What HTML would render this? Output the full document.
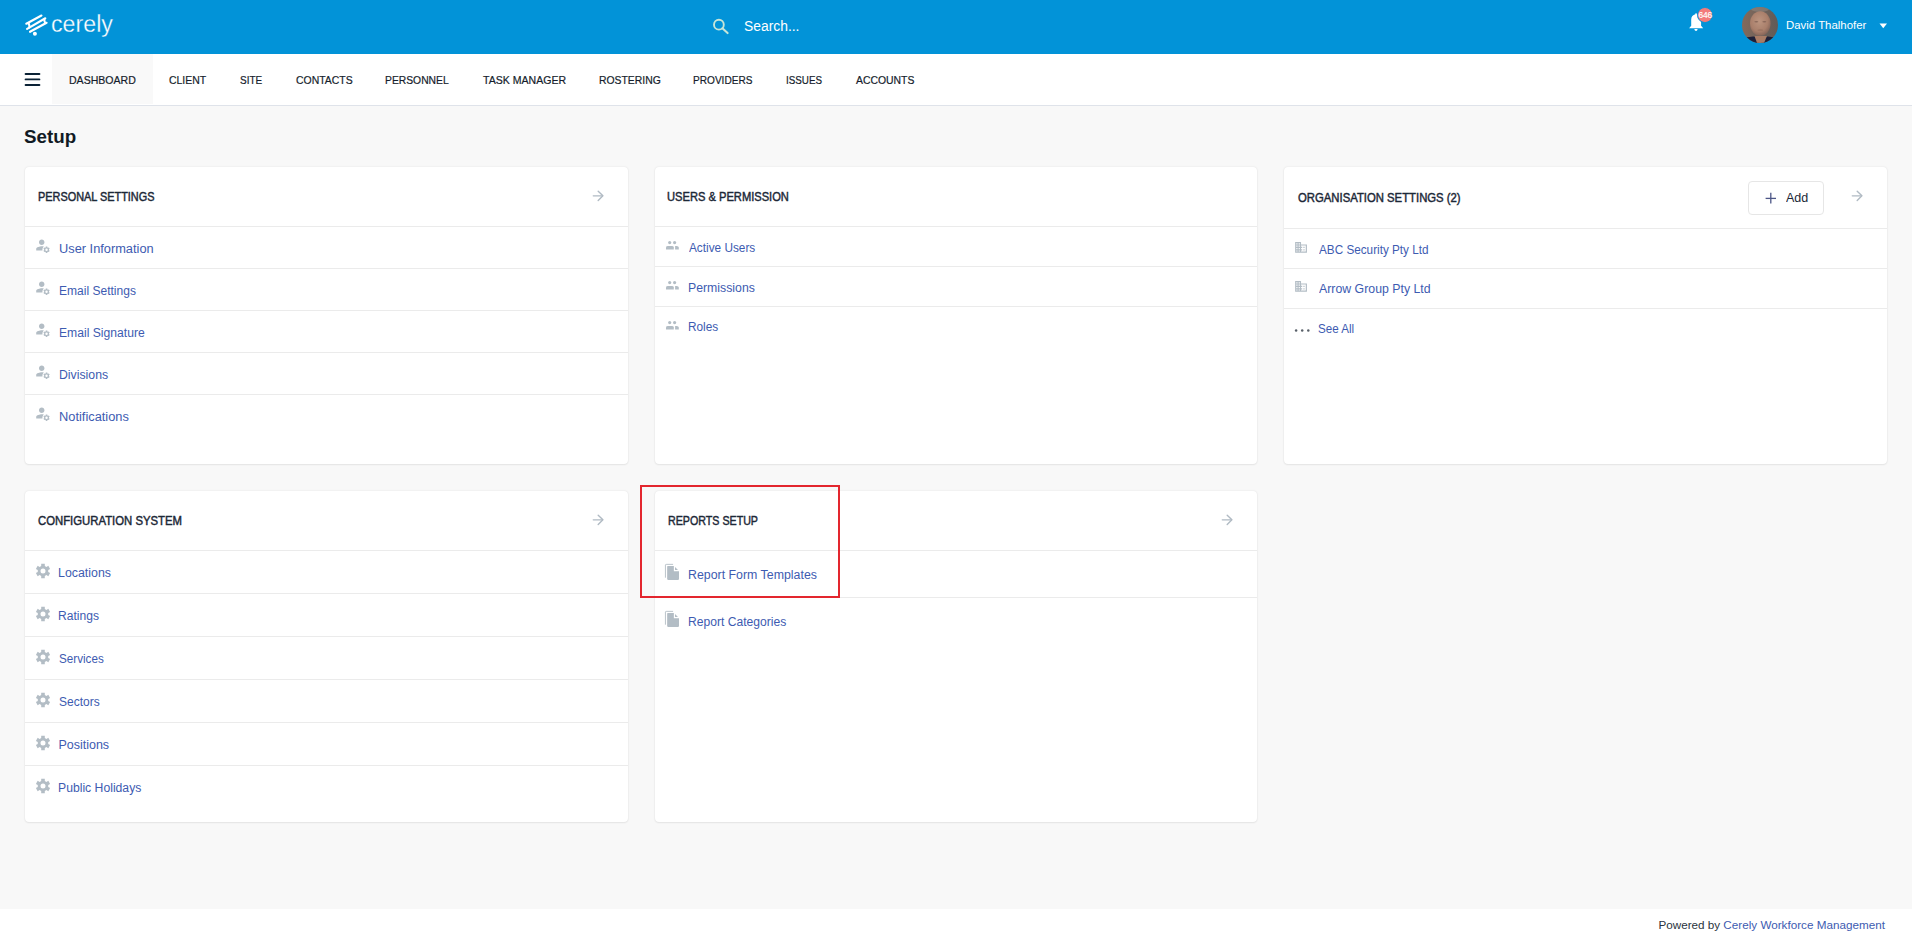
<!DOCTYPE html>
<html><head><meta charset="utf-8"><title>Setup - Cerely</title>
<style>
html,body{margin:0;padding:0}
body{width:1912px;height:934px;position:relative;overflow:hidden;background:#f8f8f8;font-family:"Liberation Sans",sans-serif}
.a{position:absolute}
.t{position:absolute;line-height:1;white-space:nowrap}
.card{background:#fff;border-radius:4px;box-shadow:0 0 2px rgba(0,0,0,0.10),0 1px 2px rgba(0,0,0,0.06)}
svg{overflow:visible}
</style></head><body>
<div class="a" style="left:0px;top:0px;width:1912px;height:54px;background:#0293d8"></div>
<svg class="a" style="left:20px;top:10px" width="32" height="30" viewBox="0 0 32 30"><g stroke="#fff" stroke-width="2.1" stroke-linecap="round" fill="none">
<line x1="6.3" y1="13.76" x2="21.47" y2="5.52"/>
<line x1="7.12" y1="18.88" x2="25.33" y2="8.27"/>
<line x1="10.02" y1="21.79" x2="26.61" y2="12.75"/>
<path d="M8.6 13.3 Q9.6 15.3 9.4 17.5"/>
<path d="M24.4 9.3 Q24.1 11.0 25.0 12.6"/>
</g><circle cx="14.9" cy="23.8" r="2" fill="#fff"/></svg>
<div class="t" style="left:51.07px;top:12.53px;font-size:23px;color:#fff;font-weight:400;transform:scaleX(1.0094);transform-origin:0 0;-webkit-text-stroke:0.3px #0293d8">cerely</div>
<svg class="a" style="left:710px;top:15px" width="22" height="22" viewBox="0 0 22 22"><circle cx="8.9" cy="9.7" r="4.9" stroke="#c6e5d8" stroke-width="1.9" fill="none"/><line x1="12.4" y1="13.3" x2="17.6" y2="18.1" stroke="#c6e5d8" stroke-width="2.1" stroke-linecap="round"/></svg>
<div class="t" style="left:743.75px;top:20.22px;font-size:13.8px;color:#fff;font-weight:400;transform:scaleX(1.0044);transform-origin:0 0;">Search...</div>
<svg class="a" style="left:1686px;top:10px" width="22" height="26" viewBox="0 0 22 26"><path d="M3.1 18.3 L5.2 15.8 L5.2 9.6 C5.2 6.6 7 4.7 9.3 4.2 L9.3 3.5 Q10 2.9 10.8 3.5 L10.8 4.2 C13.3 4.7 15.1 6.6 15.1 9.6 L15.1 15.8 L17.2 18.3 Z" fill="#fff"/><path d="M8.3 19.1 L11.7 19.1 Q11.3 21.1 10 21.1 Q8.7 21.1 8.3 19.1Z" fill="#fff"/></svg>
<div class="a" style="left:1697px;top:7.2px;width:13.6px;height:13.6px;border-radius:50%;background:#f37b7b;border:1.1px solid #0293d8"></div>
<div class="t" style="left:1698.6px;top:10.79px;font-size:8.4px;color:#fff;font-weight:400;letter-spacing:-0.25px;-webkit-text-stroke:0.15px #fff">646</div>
<svg class="a" style="left:1742px;top:7px" width="36" height="36" viewBox="0 0 36 36"><defs><clipPath id="avc"><circle cx="18" cy="18" r="18"/></clipPath>
<radialGradient id="avf" cx="0.45" cy="0.4" r="0.6"><stop offset="0" stop-color="#bc9580"/><stop offset="0.7" stop-color="#a97f6b"/><stop offset="1" stop-color="#87665a"/></radialGradient>
<linearGradient id="avb" x1="0" y1="0" x2="1" y2="0"><stop offset="0" stop-color="#84695a"/><stop offset="0.5" stop-color="#6f635c"/><stop offset="1" stop-color="#625a56"/></linearGradient></defs>
<g clip-path="url(#avc)"><rect width="36" height="36" fill="url(#avb)"/><ellipse cx="18" cy="2" rx="9" ry="3" fill="#9a918a" opacity="0.45"/>
<ellipse cx="18.3" cy="16.5" rx="10.3" ry="12.2" fill="url(#avf)"/>
<ellipse cx="14.3" cy="14.8" rx="2" ry="0.8" fill="#6a4c44" opacity="0.55"/><ellipse cx="22.3" cy="14.8" rx="2" ry="0.8" fill="#6a4c44" opacity="0.55"/><ellipse cx="18.3" cy="23" rx="3" ry="0.6" fill="#7a564a" opacity="0.5"/>
<path d="M0 36 L0 32 Q5 29.5 11 29.5 L26 29.5 Q31 29.5 36 32 L36 36Z" fill="#1e2038"/>
<path d="M12.5 29 L25 29 L22 36 L15 36Z" fill="#a87c66"/></g></svg>
<div class="t" style="left:1785.59px;top:20.01px;font-size:11.8px;color:#fff;font-weight:400;transform:scaleX(0.9672);transform-origin:0 0;">David Thalhofer</div>
<svg class="a" style="left:1879px;top:23px" width="9" height="6" viewBox="0 0 9 6"><path d="M0.5 0.5 L8 0.5 L4.25 5.2Z" fill="#fff"/></svg>
<div class="a" style="left:0px;top:54px;width:1912px;height:51px;background:#fff;border-bottom:1px solid #dfe3ea"></div>
<div class="a" style="left:52px;top:54px;width:101px;height:50px;background:#f9f9f9"></div>
<svg class="a" style="left:24px;top:71px" width="18" height="16" viewBox="0 0 18 16"><g stroke="#0b2235" stroke-width="1.9" stroke-linecap="round"><line x1="1.6" y1="3.0" x2="15.4" y2="3.0"/><line x1="1.6" y1="8.4" x2="15.4" y2="8.4"/><line x1="1.6" y1="14.0" x2="15.4" y2="14.0"/></g></svg>
<div class="t" style="left:68.76px;top:74.76px;font-size:10.8px;color:#151d2c;font-weight:400;transform:scaleX(0.9763);transform-origin:0 0;-webkit-text-stroke:0.2px #151d2c">DASHBOARD</div>
<div class="t" style="left:169.48px;top:74.76px;font-size:10.8px;color:#151d2c;font-weight:400;transform:scaleX(0.9670);transform-origin:0 0;-webkit-text-stroke:0.2px #151d2c">CLIENT</div>
<div class="t" style="left:240.10px;top:74.76px;font-size:10.8px;color:#151d2c;font-weight:400;transform:scaleX(0.9235);transform-origin:0 0;-webkit-text-stroke:0.2px #151d2c">SITE</div>
<div class="t" style="left:295.78px;top:74.76px;font-size:10.8px;color:#151d2c;font-weight:400;transform:scaleX(0.9660);transform-origin:0 0;-webkit-text-stroke:0.2px #151d2c">CONTACTS</div>
<div class="t" style="left:385.27px;top:74.76px;font-size:10.8px;color:#151d2c;font-weight:400;transform:scaleX(0.9561);transform-origin:0 0;-webkit-text-stroke:0.2px #151d2c">PERSONNEL</div>
<div class="t" style="left:482.89px;top:74.76px;font-size:10.8px;color:#151d2c;font-weight:400;transform:scaleX(0.9770);transform-origin:0 0;-webkit-text-stroke:0.2px #151d2c">TASK MANAGER</div>
<div class="t" style="left:598.67px;top:74.76px;font-size:10.8px;color:#151d2c;font-weight:400;transform:scaleX(0.9615);transform-origin:0 0;-webkit-text-stroke:0.2px #151d2c">ROSTERING</div>
<div class="t" style="left:693.39px;top:74.76px;font-size:10.8px;color:#151d2c;font-weight:400;transform:scaleX(0.9350);transform-origin:0 0;-webkit-text-stroke:0.2px #151d2c">PROVIDERS</div>
<div class="t" style="left:786.12px;top:74.76px;font-size:10.8px;color:#151d2c;font-weight:400;transform:scaleX(0.9100);transform-origin:0 0;-webkit-text-stroke:0.2px #151d2c">ISSUES</div>
<div class="t" style="left:855.80px;top:74.76px;font-size:10.8px;color:#151d2c;font-weight:400;transform:scaleX(0.9634);transform-origin:0 0;-webkit-text-stroke:0.2px #151d2c">ACCOUNTS</div>
<div class="t" style="left:23.62px;top:127.96px;font-size:18.6px;color:#111a24;font-weight:700;transform:scaleX(1.0092);transform-origin:0 0;">Setup</div>
<div class="a card" style="left:25px;top:167px;width:603px;height:297px"></div>
<div class="t" style="left:37.63px;top:190.50px;font-size:12.4px;color:#1c2837;font-weight:400;transform:scaleX(0.8796);transform-origin:0 0;-webkit-text-stroke:0.45px #1c2837">PERSONAL SETTINGS</div>
<svg class="a" style="left:592px;top:190px" width="12" height="12" viewBox="0 0 12 12"><g stroke="#b0bac3" stroke-width="1.4" fill="none" stroke-linecap="round" stroke-linejoin="round"><line x1="1.3" y1="5.85" x2="10.4" y2="5.85"/><path d="M6.2 1.3 L10.9 5.85 L6.2 10.4"/></g></svg>
<div class="a" style="left:25px;top:226px;width:603px;height:1px;background:#ebebeb"></div>
<svg class="a" style="left:36px;top:236px" width="16" height="16" viewBox="0 0 16 16"><g transform="translate(-1.18 0.64) scale(0.69)" fill="#b3bdc5"><path d="M10 12c2.21 0 4-1.79 4-4s-1.79-4-4-4-4 1.79-4 4 1.79 4 4 4zm0 2c-2.67 0-8 1.34-8 4v2h9.08c-.05-.33-.08-.66-.08-1 0-1.91.82-3.62 2.12-4.81C12.07 14.07 10.9 14 10 14z"/><path fill-rule="evenodd" d="M18.23 15.62 L18.14 14.44 L15.86 14.44 L15.77 15.62 L14.69 16.24 L13.62 15.74 L12.48 17.70 L13.45 18.37 L13.45 19.63 L12.48 20.30 L13.62 22.26 L14.69 21.76 L15.77 22.38 L15.86 23.56 L18.14 23.56 L18.23 22.38 L19.31 21.76 L20.38 22.26 L21.52 20.30 L20.55 19.63 L20.55 18.37 L21.52 17.70 L20.38 15.74 L19.31 16.24Z M18.75 19.00 A1.75 1.75 0 1 0 15.25 19.00 A1.75 1.75 0 1 0 18.75 19.00Z"/></g></svg>
<div class="t" style="left:58.70px;top:243.32px;font-size:12.5px;color:#3d5bb1;font-weight:400;transform:scaleX(1.0240);transform-origin:0 0;">User Information</div>
<div class="a" style="left:25px;top:268px;width:603px;height:1px;background:#ebebeb"></div>
<svg class="a" style="left:36px;top:278px" width="16" height="16" viewBox="0 0 16 16"><g transform="translate(-1.18 0.64) scale(0.69)" fill="#b3bdc5"><path d="M10 12c2.21 0 4-1.79 4-4s-1.79-4-4-4-4 1.79-4 4 1.79 4 4 4zm0 2c-2.67 0-8 1.34-8 4v2h9.08c-.05-.33-.08-.66-.08-1 0-1.91.82-3.62 2.12-4.81C12.07 14.07 10.9 14 10 14z"/><path fill-rule="evenodd" d="M18.23 15.62 L18.14 14.44 L15.86 14.44 L15.77 15.62 L14.69 16.24 L13.62 15.74 L12.48 17.70 L13.45 18.37 L13.45 19.63 L12.48 20.30 L13.62 22.26 L14.69 21.76 L15.77 22.38 L15.86 23.56 L18.14 23.56 L18.23 22.38 L19.31 21.76 L20.38 22.26 L21.52 20.30 L20.55 19.63 L20.55 18.37 L21.52 17.70 L20.38 15.74 L19.31 16.24Z M18.75 19.00 A1.75 1.75 0 1 0 15.25 19.00 A1.75 1.75 0 1 0 18.75 19.00Z"/></g></svg>
<div class="t" style="left:58.64px;top:285.32px;font-size:12.5px;color:#3d5bb1;font-weight:400;transform:scaleX(0.9628);transform-origin:0 0;">Email Settings</div>
<div class="a" style="left:25px;top:310px;width:603px;height:1px;background:#ebebeb"></div>
<svg class="a" style="left:36px;top:320px" width="16" height="16" viewBox="0 0 16 16"><g transform="translate(-1.18 0.64) scale(0.69)" fill="#b3bdc5"><path d="M10 12c2.21 0 4-1.79 4-4s-1.79-4-4-4-4 1.79-4 4 1.79 4 4 4zm0 2c-2.67 0-8 1.34-8 4v2h9.08c-.05-.33-.08-.66-.08-1 0-1.91.82-3.62 2.12-4.81C12.07 14.07 10.9 14 10 14z"/><path fill-rule="evenodd" d="M18.23 15.62 L18.14 14.44 L15.86 14.44 L15.77 15.62 L14.69 16.24 L13.62 15.74 L12.48 17.70 L13.45 18.37 L13.45 19.63 L12.48 20.30 L13.62 22.26 L14.69 21.76 L15.77 22.38 L15.86 23.56 L18.14 23.56 L18.23 22.38 L19.31 21.76 L20.38 22.26 L21.52 20.30 L20.55 19.63 L20.55 18.37 L21.52 17.70 L20.38 15.74 L19.31 16.24Z M18.75 19.00 A1.75 1.75 0 1 0 15.25 19.00 A1.75 1.75 0 1 0 18.75 19.00Z"/></g></svg>
<div class="t" style="left:58.63px;top:327.32px;font-size:12.5px;color:#3d5bb1;font-weight:400;transform:scaleX(0.9713);transform-origin:0 0;">Email Signature</div>
<div class="a" style="left:25px;top:352px;width:603px;height:1px;background:#ebebeb"></div>
<svg class="a" style="left:36px;top:362px" width="16" height="16" viewBox="0 0 16 16"><g transform="translate(-1.18 0.64) scale(0.69)" fill="#b3bdc5"><path d="M10 12c2.21 0 4-1.79 4-4s-1.79-4-4-4-4 1.79-4 4 1.79 4 4 4zm0 2c-2.67 0-8 1.34-8 4v2h9.08c-.05-.33-.08-.66-.08-1 0-1.91.82-3.62 2.12-4.81C12.07 14.07 10.9 14 10 14z"/><path fill-rule="evenodd" d="M18.23 15.62 L18.14 14.44 L15.86 14.44 L15.77 15.62 L14.69 16.24 L13.62 15.74 L12.48 17.70 L13.45 18.37 L13.45 19.63 L12.48 20.30 L13.62 22.26 L14.69 21.76 L15.77 22.38 L15.86 23.56 L18.14 23.56 L18.23 22.38 L19.31 21.76 L20.38 22.26 L21.52 20.30 L20.55 19.63 L20.55 18.37 L21.52 17.70 L20.38 15.74 L19.31 16.24Z M18.75 19.00 A1.75 1.75 0 1 0 15.25 19.00 A1.75 1.75 0 1 0 18.75 19.00Z"/></g></svg>
<div class="t" style="left:58.62px;top:369.32px;font-size:12.5px;color:#3d5bb1;font-weight:400;transform:scaleX(0.9828);transform-origin:0 0;">Divisions</div>
<div class="a" style="left:25px;top:394px;width:603px;height:1px;background:#ebebeb"></div>
<svg class="a" style="left:36px;top:404px" width="16" height="16" viewBox="0 0 16 16"><g transform="translate(-1.18 0.64) scale(0.69)" fill="#b3bdc5"><path d="M10 12c2.21 0 4-1.79 4-4s-1.79-4-4-4-4 1.79-4 4 1.79 4 4 4zm0 2c-2.67 0-8 1.34-8 4v2h9.08c-.05-.33-.08-.66-.08-1 0-1.91.82-3.62 2.12-4.81C12.07 14.07 10.9 14 10 14z"/><path fill-rule="evenodd" d="M18.23 15.62 L18.14 14.44 L15.86 14.44 L15.77 15.62 L14.69 16.24 L13.62 15.74 L12.48 17.70 L13.45 18.37 L13.45 19.63 L12.48 20.30 L13.62 22.26 L14.69 21.76 L15.77 22.38 L15.86 23.56 L18.14 23.56 L18.23 22.38 L19.31 21.76 L20.38 22.26 L21.52 20.30 L20.55 19.63 L20.55 18.37 L21.52 17.70 L20.38 15.74 L19.31 16.24Z M18.75 19.00 A1.75 1.75 0 1 0 15.25 19.00 A1.75 1.75 0 1 0 18.75 19.00Z"/></g></svg>
<div class="t" style="left:58.57px;top:411.32px;font-size:12.5px;color:#3d5bb1;font-weight:400;transform:scaleX(1.0268);transform-origin:0 0;">Notifications</div>
<div class="a card" style="left:655px;top:167px;width:602px;height:297px"></div>
<div class="t" style="left:667.42px;top:190.55px;font-size:12.4px;color:#1c2837;font-weight:400;transform:scaleX(0.8987);transform-origin:0 0;-webkit-text-stroke:0.45px #1c2837">USERS & PERMISSION</div>
<div class="a" style="left:655px;top:226px;width:602px;height:1px;background:#ebebeb"></div>
<svg class="a" style="left:665px;top:236px" width="16" height="16" viewBox="0 0 16 16"><circle cx="4.7" cy="6.6" r="1.6" fill="#b3bdc5"/><circle cx="9.6" cy="6.6" r="1.6" fill="#b3bdc5"/>
<path d="M1 13.6 L1 11.4 Q1 10.1 3 10.1 L6.8 10.1 Q8.8 10.1 8.8 11.4 L8.8 13.6Z" fill="#b3bdc5"/>
<path d="M10.1 10.1 L11.6 10.1 Q13.8 10.1 13.8 11.6 L13.8 13.6 L10.1 13.6Z" fill="#b3bdc5"/></svg>
<div class="t" style="left:689.40px;top:242.42px;font-size:12.5px;color:#3d5bb1;font-weight:400;transform:scaleX(0.9444);transform-origin:0 0;">Active Users</div>
<div class="a" style="left:655px;top:266px;width:602px;height:1px;background:#ebebeb"></div>
<svg class="a" style="left:665px;top:276px" width="16" height="16" viewBox="0 0 16 16"><circle cx="4.7" cy="6.6" r="1.6" fill="#b3bdc5"/><circle cx="9.6" cy="6.6" r="1.6" fill="#b3bdc5"/>
<path d="M1 13.6 L1 11.4 Q1 10.1 3 10.1 L6.8 10.1 Q8.8 10.1 8.8 11.4 L8.8 13.6Z" fill="#b3bdc5"/>
<path d="M10.1 10.1 L11.6 10.1 Q13.8 10.1 13.8 11.6 L13.8 13.6 L10.1 13.6Z" fill="#b3bdc5"/></svg>
<div class="t" style="left:688.42px;top:281.82px;font-size:12.5px;color:#3d5bb1;font-weight:400;transform:scaleX(0.9820);transform-origin:0 0;">Permissions</div>
<div class="a" style="left:655px;top:306px;width:602px;height:1px;background:#ebebeb"></div>
<svg class="a" style="left:665px;top:316px" width="16" height="16" viewBox="0 0 16 16"><circle cx="4.7" cy="6.6" r="1.6" fill="#b3bdc5"/><circle cx="9.6" cy="6.6" r="1.6" fill="#b3bdc5"/>
<path d="M1 13.6 L1 11.4 Q1 10.1 3 10.1 L6.8 10.1 Q8.8 10.1 8.8 11.4 L8.8 13.6Z" fill="#b3bdc5"/>
<path d="M10.1 10.1 L11.6 10.1 Q13.8 10.1 13.8 11.6 L13.8 13.6 L10.1 13.6Z" fill="#b3bdc5"/></svg>
<div class="t" style="left:688.46px;top:321.22px;font-size:12.5px;color:#3d5bb1;font-weight:400;transform:scaleX(0.9450);transform-origin:0 0;">Roles</div>
<div class="a card" style="left:1284px;top:167px;width:603px;height:297px"></div>
<div class="t" style="left:1298.05px;top:191.80px;font-size:12.4px;color:#1c2837;font-weight:400;transform:scaleX(0.9133);transform-origin:0 0;-webkit-text-stroke:0.45px #1c2837">ORGANISATION SETTINGS (2)</div>
<div class="a" style="left:1748px;top:181px;width:74px;height:32px;border:1px solid #e6e6e6;border-radius:4px;background:#fff"></div>
<svg class="a" style="left:1764px;top:191px" width="14" height="14" viewBox="0 0 14 14"><g stroke="#4c5686" stroke-width="1.3"><line x1="1.6" y1="7.4" x2="12" y2="7.4"/><line x1="6.8" y1="1.8" x2="6.8" y2="12.6"/></g></svg>
<div class="t" style="left:1786.30px;top:191.50px;font-size:12.4px;color:#1c2837;font-weight:400;transform:scaleX(1.0109);transform-origin:0 0;">Add</div>
<svg class="a" style="left:1851px;top:190px" width="12" height="12" viewBox="0 0 12 12"><g stroke="#b0bac3" stroke-width="1.4" fill="none" stroke-linecap="round" stroke-linejoin="round"><line x1="1.3" y1="5.85" x2="10.4" y2="5.85"/><path d="M6.2 1.3 L10.9 5.85 L6.2 10.4"/></g></svg>
<div class="a" style="left:1284px;top:228px;width:603px;height:1px;background:#ebebeb"></div>
<svg class="a" style="left:1290px;top:238px" width="22" height="20" viewBox="0 0 22 20"><path transform="translate(3.96 2.19) scale(0.59 0.6)" fill="#b3bdc5" d="M12 7V3H2v18h20V7H12zM6 19H4v-2h2v2zm0-4H4v-2h2v2zm0-4H4V9h2v2zm0-4H4V5h2v2zm4 12H8v-2h2v2zm0-4H8v-2h2v2zm0-4H8V9h2v2zm0-4H8V5h2v2zm10 12h-8v-2h2v-2h-2v-2h2v-2h-2V9h8v10zm-2-8h-2v2h2v-2zm0 4h-2v2h2v-2z"/></svg>
<div class="t" style="left:1318.80px;top:243.62px;font-size:12.5px;color:#3d5bb1;font-weight:400;transform:scaleX(0.9387);transform-origin:0 0;">ABC Security Pty Ltd</div>
<div class="a" style="left:1284px;top:268px;width:603px;height:1px;background:#ebebeb"></div>
<svg class="a" style="left:1290px;top:277px" width="22" height="20" viewBox="0 0 22 20"><path transform="translate(3.96 2.19) scale(0.59 0.6)" fill="#b3bdc5" d="M12 7V3H2v18h20V7H12zM6 19H4v-2h2v2zm0-4H4v-2h2v2zm0-4H4V9h2v2zm0-4H4V5h2v2zm4 12H8v-2h2v2zm0-4H8v-2h2v2zm0-4H8V9h2v2zm0-4H8V5h2v2zm10 12h-8v-2h2v-2h-2v-2h2v-2h-2V9h8v10zm-2-8h-2v2h2v-2zm0 4h-2v2h2v-2z"/></svg>
<div class="t" style="left:1318.80px;top:283.12px;font-size:12.5px;color:#3d5bb1;font-weight:400;transform:scaleX(0.9855);transform-origin:0 0;">Arrow Group Pty Ltd</div>
<div class="a" style="left:1284px;top:308px;width:603px;height:1px;background:#ebebeb"></div>
<svg class="a" style="left:1294px;top:327px" width="17" height="6" viewBox="0 0 17 6"><g fill="#596069"><circle cx="2.1" cy="3.6" r="1.25"/><circle cx="8.2" cy="3.6" r="1.25"/><circle cx="14.3" cy="3.6" r="1.25"/></g></svg>
<div class="t" style="left:1318.34px;top:323.42px;font-size:12.5px;color:#3d5bb1;font-weight:400;transform:scaleX(0.9288);transform-origin:0 0;">See All</div>
<div class="a card" style="left:25px;top:491px;width:603px;height:331px"></div>
<div class="t" style="left:37.93px;top:514.50px;font-size:12.4px;color:#1c2837;font-weight:400;transform:scaleX(0.9147);transform-origin:0 0;-webkit-text-stroke:0.45px #1c2837">CONFIGURATION SYSTEM</div>
<svg class="a" style="left:592px;top:514px" width="12" height="12" viewBox="0 0 12 12"><g stroke="#b0bac3" stroke-width="1.4" fill="none" stroke-linecap="round" stroke-linejoin="round"><line x1="1.3" y1="5.85" x2="10.4" y2="5.85"/><path d="M6.2 1.3 L10.9 5.85 L6.2 10.4"/></g></svg>
<div class="a" style="left:25px;top:550px;width:603px;height:1px;background:#ebebeb"></div>
<svg class="a" style="left:34px;top:562px" width="18" height="18" viewBox="0 0 18 18"><path fill-rule="evenodd" d="M10.81 4.02 L10.79 1.82 L7.21 1.82 L7.19 4.02 L5.59 4.94 L3.68 3.86 L1.89 6.96 L3.78 8.08 L3.78 9.92 L1.89 11.04 L3.68 14.14 L5.59 13.06 L7.19 13.98 L7.21 16.18 L10.79 16.18 L10.81 13.98 L12.41 13.06 L14.32 14.14 L16.11 11.04 L14.22 9.92 L14.22 8.08 L16.11 6.96 L14.32 3.86 L12.41 4.94Z M11.50 9.00 A2.5 2.5 0 1 0 6.50 9.00 A2.5 2.5 0 1 0 11.50 9.00Z" fill="#b3bdc5"/></svg>
<div class="t" style="left:58.41px;top:566.72px;font-size:12.5px;color:#3d5bb1;font-weight:400;transform:scaleX(0.9897);transform-origin:0 0;">Locations</div>
<div class="a" style="left:25px;top:593px;width:603px;height:1px;background:#ebebeb"></div>
<svg class="a" style="left:34px;top:605px" width="18" height="18" viewBox="0 0 18 18"><path fill-rule="evenodd" d="M10.81 4.02 L10.79 1.82 L7.21 1.82 L7.19 4.02 L5.59 4.94 L3.68 3.86 L1.89 6.96 L3.78 8.08 L3.78 9.92 L1.89 11.04 L3.68 14.14 L5.59 13.06 L7.19 13.98 L7.21 16.18 L10.79 16.18 L10.81 13.98 L12.41 13.06 L14.32 14.14 L16.11 11.04 L14.22 9.92 L14.22 8.08 L16.11 6.96 L14.32 3.86 L12.41 4.94Z M11.50 9.00 A2.5 2.5 0 1 0 6.50 9.00 A2.5 2.5 0 1 0 11.50 9.00Z" fill="#b3bdc5"/></svg>
<div class="t" style="left:58.43px;top:609.72px;font-size:12.5px;color:#3d5bb1;font-weight:400;transform:scaleX(0.9657);transform-origin:0 0;">Ratings</div>
<div class="a" style="left:25px;top:636px;width:603px;height:1px;background:#ebebeb"></div>
<svg class="a" style="left:34px;top:648px" width="18" height="18" viewBox="0 0 18 18"><path fill-rule="evenodd" d="M10.81 4.02 L10.79 1.82 L7.21 1.82 L7.19 4.02 L5.59 4.94 L3.68 3.86 L1.89 6.96 L3.78 8.08 L3.78 9.92 L1.89 11.04 L3.68 14.14 L5.59 13.06 L7.19 13.98 L7.21 16.18 L10.79 16.18 L10.81 13.98 L12.41 13.06 L14.32 14.14 L16.11 11.04 L14.22 9.92 L14.22 8.08 L16.11 6.96 L14.32 3.86 L12.41 4.94Z M11.50 9.00 A2.5 2.5 0 1 0 6.50 9.00 A2.5 2.5 0 1 0 11.50 9.00Z" fill="#b3bdc5"/></svg>
<div class="t" style="left:58.93px;top:652.72px;font-size:12.5px;color:#3d5bb1;font-weight:400;transform:scaleX(0.9329);transform-origin:0 0;">Services</div>
<div class="a" style="left:25px;top:679px;width:603px;height:1px;background:#ebebeb"></div>
<svg class="a" style="left:34px;top:691px" width="18" height="18" viewBox="0 0 18 18"><path fill-rule="evenodd" d="M10.81 4.02 L10.79 1.82 L7.21 1.82 L7.19 4.02 L5.59 4.94 L3.68 3.86 L1.89 6.96 L3.78 8.08 L3.78 9.92 L1.89 11.04 L3.68 14.14 L5.59 13.06 L7.19 13.98 L7.21 16.18 L10.79 16.18 L10.81 13.98 L12.41 13.06 L14.32 14.14 L16.11 11.04 L14.22 9.92 L14.22 8.08 L16.11 6.96 L14.32 3.86 L12.41 4.94Z M11.50 9.00 A2.5 2.5 0 1 0 6.50 9.00 A2.5 2.5 0 1 0 11.50 9.00Z" fill="#b3bdc5"/></svg>
<div class="t" style="left:58.92px;top:695.72px;font-size:12.5px;color:#3d5bb1;font-weight:400;transform:scaleX(0.9590);transform-origin:0 0;">Sectors</div>
<div class="a" style="left:25px;top:722px;width:603px;height:1px;background:#ebebeb"></div>
<svg class="a" style="left:34px;top:734px" width="18" height="18" viewBox="0 0 18 18"><path fill-rule="evenodd" d="M10.81 4.02 L10.79 1.82 L7.21 1.82 L7.19 4.02 L5.59 4.94 L3.68 3.86 L1.89 6.96 L3.78 8.08 L3.78 9.92 L1.89 11.04 L3.68 14.14 L5.59 13.06 L7.19 13.98 L7.21 16.18 L10.79 16.18 L10.81 13.98 L12.41 13.06 L14.32 14.14 L16.11 11.04 L14.22 9.92 L14.22 8.08 L16.11 6.96 L14.32 3.86 L12.41 4.94Z M11.50 9.00 A2.5 2.5 0 1 0 6.50 9.00 A2.5 2.5 0 1 0 11.50 9.00Z" fill="#b3bdc5"/></svg>
<div class="t" style="left:58.40px;top:738.72px;font-size:12.5px;color:#3d5bb1;font-weight:400;">Positions</div>
<div class="a" style="left:25px;top:765px;width:603px;height:1px;background:#ebebeb"></div>
<svg class="a" style="left:34px;top:777px" width="18" height="18" viewBox="0 0 18 18"><path fill-rule="evenodd" d="M10.81 4.02 L10.79 1.82 L7.21 1.82 L7.19 4.02 L5.59 4.94 L3.68 3.86 L1.89 6.96 L3.78 8.08 L3.78 9.92 L1.89 11.04 L3.68 14.14 L5.59 13.06 L7.19 13.98 L7.21 16.18 L10.79 16.18 L10.81 13.98 L12.41 13.06 L14.32 14.14 L16.11 11.04 L14.22 9.92 L14.22 8.08 L16.11 6.96 L14.32 3.86 L12.41 4.94Z M11.50 9.00 A2.5 2.5 0 1 0 6.50 9.00 A2.5 2.5 0 1 0 11.50 9.00Z" fill="#b3bdc5"/></svg>
<div class="t" style="left:58.42px;top:781.72px;font-size:12.5px;color:#3d5bb1;font-weight:400;transform:scaleX(0.9753);transform-origin:0 0;">Public Holidays</div>
<div class="a card" style="left:655px;top:491px;width:602px;height:331px"></div>
<div class="t" style="left:667.65px;top:514.50px;font-size:12.4px;color:#1c2837;font-weight:400;transform:scaleX(0.8618);transform-origin:0 0;-webkit-text-stroke:0.45px #1c2837">REPORTS SETUP</div>
<svg class="a" style="left:1221px;top:514px" width="12" height="12" viewBox="0 0 12 12"><g stroke="#b0bac3" stroke-width="1.4" fill="none" stroke-linecap="round" stroke-linejoin="round"><line x1="1.3" y1="5.85" x2="10.4" y2="5.85"/><path d="M6.2 1.3 L10.9 5.85 L6.2 10.4"/></g></svg>
<div class="a" style="left:655px;top:550px;width:602px;height:1px;background:#ebebeb"></div>
<svg class="a" style="left:664px;top:563px" width="16" height="18" viewBox="0 0 16 18"><g transform="translate(0.5 0.5)"><path d="M0.93 14.2 L0.93 1.6 Q0.93 0.87 1.7 0.87 L8.6 0.87" fill="none" stroke="#b3bdc5" stroke-width="0.9"/>
<path d="M2.67 15.6 L2.67 3.2 Q2.67 2.54 3.3 2.54 L9.35 2.54 L9.35 7.68 L14.5 7.68 L14.5 15.6 Q14.5 16.42 13.7 16.42 L3.5 16.42 Q2.67 16.42 2.67 15.6Z" fill="#b3bdc5"/>
<path d="M10.51 3.44 L13.47 6.4 L10.51 6.4Z" fill="#b3bdc5"/></g></svg>
<div class="t" style="left:688.41px;top:569.42px;font-size:12.5px;color:#3d5bb1;font-weight:400;transform:scaleX(0.9890);transform-origin:0 0;">Report Form Templates</div>
<div class="a" style="left:655px;top:597px;width:602px;height:1px;background:#ebebeb"></div>
<svg class="a" style="left:664px;top:610px" width="16" height="18" viewBox="0 0 16 18"><g transform="translate(0.5 0.5)"><path d="M0.93 14.2 L0.93 1.6 Q0.93 0.87 1.7 0.87 L8.6 0.87" fill="none" stroke="#b3bdc5" stroke-width="0.9"/>
<path d="M2.67 15.6 L2.67 3.2 Q2.67 2.54 3.3 2.54 L9.35 2.54 L9.35 7.68 L14.5 7.68 L14.5 15.6 Q14.5 16.42 13.7 16.42 L3.5 16.42 Q2.67 16.42 2.67 15.6Z" fill="#b3bdc5"/>
<path d="M10.51 3.44 L13.47 6.4 L10.51 6.4Z" fill="#b3bdc5"/></g></svg>
<div class="t" style="left:688.43px;top:616.42px;font-size:12.5px;color:#3d5bb1;font-weight:400;transform:scaleX(0.9694);transform-origin:0 0;">Report Categories</div>
<div class="a" style="left:640px;top:485px;width:196px;height:109px;border:2px solid #e3262e"></div>
<div class="a" style="left:0px;top:909px;width:1912px;height:25px;background:#fff"></div>
<div class="t" style="left:1658.4px;top:919.10px;font-size:11.7px;color:#2a3440">Powered by <span style="color:#3d5bb1">Cerely Workforce Management</span></div>
</body></html>
